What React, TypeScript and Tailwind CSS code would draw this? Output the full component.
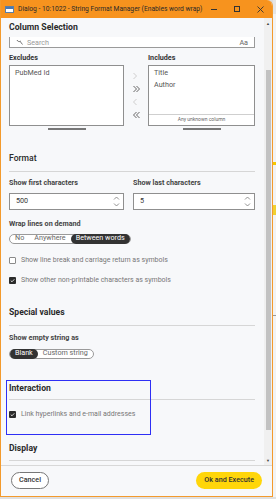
import React from "react";

const font = { fontFamily: "Roboto, 'Liberation Sans', sans-serif" };

function Check({ checked }: { checked: boolean }) {
  return checked ? (
    <span className="w-[7px] h-[7px] bg-[#2b2b2b] rounded-[1px] flex items-center justify-center shrink-0">
      <svg width="5" height="5" viewBox="0 0 10 10">
        <path d="M1.5 5.2 L4 7.6 L8.6 2.6" stroke="#fff" strokeWidth="1.6" fill="none" />
      </svg>
    </span>
  ) : (
    <span className="w-[7px] h-[7px] border border-[#8a8a8a] bg-white rounded-[1px] shrink-0" />
  );
}

function Segmented({ items, active }: { items: string[]; active: number }) {
  return (
    <div className="flex">
      <div className="flex h-[10px] items-center rounded-full border border-[#9a9a9a] bg-white">
        {items.map((it, i) => (
          <span
            key={it}
            className={
              i === active
                ? "h-[10px] -my-px flex items-center px-[5px] rounded-full bg-[#333] text-white text-[7.2px] whitespace-nowrap"
                : "flex items-center px-[5px] text-[#666] text-[7.2px] whitespace-nowrap"
            }
          >
            {it}
          </span>
        ))}
      </div>
    </div>
  );
}

function Heading({ children, bold = true }: { children: React.ReactNode; bold?: boolean }) {
  return (
    <div className={`h-[12px] flex items-center text-[8.6px] text-[#2a2a2a] ${bold ? "font-bold" : "font-medium"}`}>
      {children}
    </div>
  );
}

function Spin({ value }: { value: string }) {
  return (
    <div className="flex-1 h-[17px] border border-[#8f8f8f] bg-white flex items-center pl-[6px] pr-[3px] text-[7.2px] text-[#333]">
      <span className="flex-1">{value}</span>
      <svg width="7" height="11" viewBox="0 0 7 11">
        <path d="M1 3.5 L3.5 1 L6 3.5" stroke="#777" strokeWidth="0.8" fill="none" />
        <path d="M1 7.5 L3.5 10 L6 7.5" stroke="#777" strokeWidth="0.8" fill="none" />
      </svg>
    </div>
  );
}

function Arrow({ dir, double, dim }: { dir: "r" | "l"; double?: boolean; dim?: boolean }) {
  const c = dim ? "#c8c8c8" : "#555";
  const one = dir === "r" ? "M1.5 1 L4.5 4 L1.5 7" : "M4.5 1 L1.5 4 L4.5 7";
  const two = dir === "r" ? "M4.5 1 L7.5 4 L4.5 7" : "M7.5 1 L4.5 4 L7.5 7";
  return (
    <svg width="9" height="8" viewBox="0 0 9 8">
      <path d={one} stroke={c} strokeWidth="0.9" fill="none" />
      {double && <path d={two} stroke={c} strokeWidth="0.9" fill="none" />}
    </svg>
  );
}

export default function App() {
  return (
    <div className="w-[276px] h-[499px] flex flex-col bg-[#dcdcdc] overflow-hidden" style={font}>
      <div className="flex h-[497px]">
        {/* dialog window */}
        <div className="w-[273px] flex flex-col border-x border-b border-[#f39a2c] rounded-tr-[6px] bg-[#f7f8fa] overflow-hidden">
          {/* title bar */}
          <div className="h-[18px] shrink-0 bg-[#f7931e] flex items-center pl-[4px] pr-[6px]">
            <span className="w-[9px] h-[7px] bg-white border border-[#5a7fa8] flex items-start shrink-0">
              <span className="w-full h-[2px] bg-[#4a78b0]" />
            </span>
            <span className="ml-[4px] text-[6.7px] text-[#2a2a2a] whitespace-nowrap">
              Dialog - 10:1022 - String Format Manager (Enables word wrap)
            </span>
            <div className="flex-1" />
            <span className="w-[6px] h-px bg-[#333] mr-[17px] shrink-0" />
            <span className="w-[6px] h-[6px] border border-[#333] mr-[17px] shrink-0" />
            <svg width="7" height="7" viewBox="0 0 7 7" className="mr-[2px] shrink-0">
              <path d="M0.5 0.5 L6.5 6.5 M6.5 0.5 L0.5 6.5" stroke="#333" strokeWidth="0.9" />
            </svg>
          </div>

          {/* body */}
          <div className="flex flex-1 min-h-0">
            <div className="flex-1 pl-[8px] pr-[9px] overflow-hidden">
              <div className="h-[19px] flex items-center text-[8.7px] font-bold text-[#2a2a2a]">Column Selection</div>
              <div className="h-[11px] border-x border-b border-[#9a9a9a] bg-white flex items-end pb-[1px] px-[6px] text-[7.2px] text-[#999]">
                <svg width="7" height="5" viewBox="0 0 7 5" className="mb-[1px]">
                  <path d="M1 0 A2.5 2.5 0 0 0 5 1" stroke="#555" strokeWidth="0.8" fill="none" />
                  <path d="M4.6 2 L6.5 4.5" stroke="#555" strokeWidth="0.8" />
                </svg>
                <span className="ml-[4px] flex-1 leading-none">Search</span>
                <span className="leading-none text-[#666]">Aa</span>
              </div>

              <div className="flex gap-[8px] mt-[4px]">
                <div className="w-[115px] flex flex-col">
                  <div className="h-[13px] flex items-center text-[7.2px] font-bold text-[#333]">Excludes</div>
                  <div className="h-[61px] border border-[#8f8f8f] bg-white px-[5px] pt-[1px] text-[7.2px] text-[#555] leading-[11.5px]">
                    PubMed Id
                  </div>
                  <div className="mt-[2px] mx-auto w-[38px] h-[1.5px] bg-[#777]" />
                </div>
                <div className="w-[8px] flex flex-col items-center pt-[20px] gap-[5px]">
                  <Arrow dir="r" dim />
                  <Arrow dir="r" double />
                  <Arrow dir="l" dim />
                  <Arrow dir="l" double />
                </div>
                <div className="flex-1 flex flex-col">
                  <div className="h-[13px] flex items-center text-[7.2px] font-bold text-[#333]">Includes</div>
                  <div className="h-[61px] border border-[#8f8f8f] bg-white flex flex-col">
                    <div className="flex-1 px-[5px] pt-[1px] text-[7.2px] text-[#555] leading-[11.5px]">
                      <div>Title</div>
                      <div>Author</div>
                    </div>
                    <div className="h-[11px] border-t border-[#cfcfcf] flex items-center justify-center text-[5px] text-[#666]">
                      Any unknown column
                    </div>
                  </div>
                  <div className="mt-[2px] mx-auto w-[38px] h-[1.5px] bg-[#777]" />
                </div>
              </div>

              {/* Format */}
              <div className="mt-[23px]">
                <Heading bold={false}>Format</Heading>
                <div className="mt-[6px] h-px bg-[#d6d6d6]" />
                <div className="mt-[7px] flex gap-[9px] text-[7.2px] font-bold text-[#444] h-[10px] items-center">
                  <span className="w-[115px]">Show first characters</span>
                  <span>Show last characters</span>
                </div>
                <div className="mt-[4px] flex gap-[9px]">
                  <div className="w-[115px] flex">
                    <Spin value="500" />
                  </div>
                  <div className="flex-1 flex">
                    <Spin value="5" />
                  </div>
                </div>
                <div className="mt-[10px] h-[10px] flex items-center text-[7.2px] font-bold text-[#444]">Wrap lines on demand</div>
                <div className="mt-[4px]">
                  <Segmented items={["No", "Anywhere", "Between words"]} active={2} />
                </div>
                <div className="mt-[13px] h-[8px] flex items-center gap-[5px] text-[7px] text-[#777]">
                  <Check checked={false} />
                  <span>Show line break and carriage return as symbols</span>
                </div>
                <div className="mt-[12px] h-[8px] flex items-center gap-[5px] text-[7px] text-[#777]">
                  <Check checked />
                  <span>Show other non-printable characters as symbols</span>
                </div>
              </div>

              {/* Special values */}
              <div className="mt-[22px]">
                <Heading>Special values</Heading>
                <div className="mt-[6px] h-px bg-[#d6d6d6]" />
                <div className="mt-[8px] h-[10px] flex items-center text-[7.2px] font-bold text-[#444]">Show empty string as</div>
                <div className="mt-[5px]">
                  <Segmented items={["Blank", "Custom string"]} active={0} />
                </div>
              </div>

              {/* Interaction */}
              <div className="mt-[21px] relative pt-[3px]">
                <div className="absolute -left-[3px] top-0 w-[145px] h-[55px] border-[1.5px] border-[#2f2ff5]" />
                <Heading>Interaction</Heading>
                <div className="mt-[4px] h-px bg-[#d6d6d6]" />
                <div className="mt-[11px] h-[8px] flex items-center gap-[5px] text-[7px] text-[#777]">
                  <Check checked />
                  <span>Link hyperlinks and e-mail addresses</span>
                </div>
              </div>

              {/* Display */}
              <div className="mt-[24px]">
                <Heading>Display</Heading>
                <div className="mt-[5px] h-px bg-[#d6d6d6]" />
              </div>
            </div>

            {/* scrollbar */}
            <div className="w-[8px] bg-[#f0f0f0] flex flex-col items-center">
              <span className="mt-[3px] text-[4px] leading-[5px] text-[#444]">▲</span>
              <div className="mt-[44px] w-[5px] h-[360px] bg-[#c2c2c2]" />
              <div className="flex-1" />
              <span className="mb-[2px] text-[4px] leading-[5px] text-[#444]">▼</span>
            </div>
          </div>

          {/* footer */}
          <div className="h-[31px] shrink-0 border-t border-[#d8d8d8] flex items-center px-[10px] pb-[1px]">
            <button className="h-[17px] px-[7px] rounded-full border border-[#777] text-[7.2px] font-medium text-[#333] bg-white whitespace-nowrap">
              Cancel
            </button>
            <div className="flex-1" />
            <button className="h-[17px] px-[8px] rounded-full bg-[#ffd60a] text-[7.2px] font-medium text-[#333] whitespace-nowrap">
              Ok and Execute
            </button>
          </div>
        </div>

        {/* background app */}
        <div className="flex-1 bg-[#f3f3f3] flex flex-col">
          <div className="h-[14px] bg-[#e5e5e5]" />
          <div className="mt-[148px] h-[3px] bg-[#f5c800]" />
          <div className="mt-[40px] h-[10px] bg-[#f0d030]" />
          <div className="mt-[100px] h-px bg-[#999]" />
        </div>
      </div>
      <div className="flex-1 bg-[#e0e0e0]" />
    </div>
  );
}
